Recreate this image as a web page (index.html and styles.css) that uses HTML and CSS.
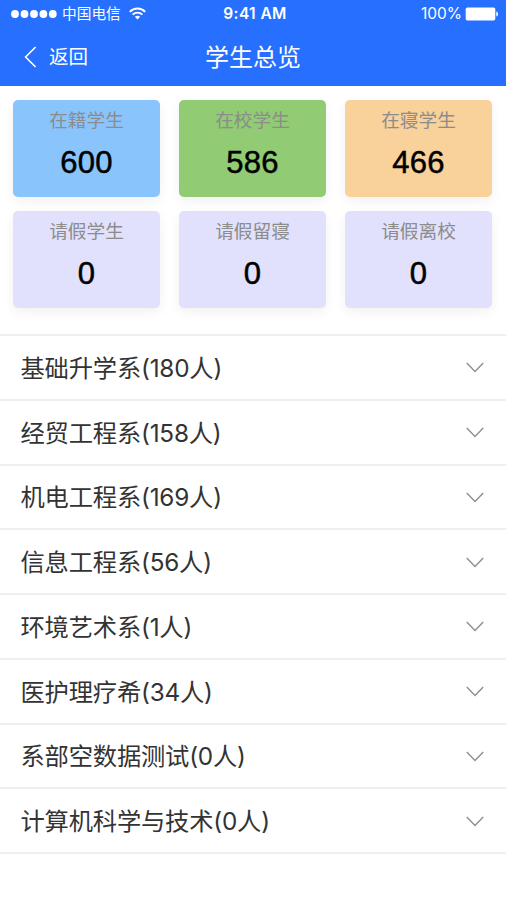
FILE: index.html
```html
<!DOCTYPE html>
<html lang="zh-CN">
<head>
  <meta charset="UTF-8">
  <meta name="viewport" content="width=device-width, initial-scale=1.0">
  <title>学生总览</title>
  <link rel="stylesheet" href="styles.css">
</head>
<body>
  <div class="page">
    <header class="header">
      <div class="status-bar">
        <div class="status-left">
          <svg class="signal" width="46" height="8" viewBox="0 0 46 8" fill="#fff">
            <circle cx="4" cy="4" r="3.9"/>
            <circle cx="13.5" cy="4" r="3.9"/>
            <circle cx="23" cy="4" r="3.9"/>
            <circle cx="32.4" cy="4" r="3.9"/>
            <circle cx="41.8" cy="4" r="3.9"/>
          </svg>
          <span class="carrier">中国电信</span>
          <svg class="wifi" width="17" height="13" viewBox="0 0 17 13" fill="none" stroke="#fff" stroke-width="1.9">
            <path d="M0.8 4.8C5 0.3 12 0.3 16.2 4.8"/>
            <path d="M3.6 7.6C6.3 4.9 10.7 4.9 13.4 7.6"/>
            <path d="M8.5 12.4L5.9 9.8C7.3 8.4 9.7 8.4 11.1 9.8Z" fill="#fff" stroke="none"/>
          </svg>
        </div>
        <div class="time">9:41 AM</div>
        <div class="status-right">
          <span class="percent">100%</span>
          <svg class="battery" width="34" height="14" viewBox="0 0 34 14" fill="#fff">
            <rect x="0.7" y="0.6" width="29.6" height="12.8" rx="1.6"/>
            <path d="M31.3 4.4C33.6 5 33.6 9 31.3 9.6Z"/>
          </svg>
        </div>
      </div>
      <div class="nav-bar">
        <a class="back">
          <svg width="13" height="22" viewBox="0 0 13 22" fill="none" stroke="#fff" stroke-width="1.6">
            <path d="M11.6 1L1.6 11L11.6 21"/>
          </svg>
          <span>返回</span>
        </a>
        <h1 class="title">学生总览</h1>
      </div>
    </header>

    <section class="stats">
      <div class="card blue"><div class="label">在籍学生</div><div class="num">600</div></div>
      <div class="card green"><div class="label">在校学生</div><div class="num">586</div></div>
      <div class="card orange"><div class="label">在寝学生</div><div class="num">466</div></div>
      <div class="card"><div class="label">请假学生</div><div class="num">0</div></div>
      <div class="card"><div class="label">请假留寝</div><div class="num">0</div></div>
      <div class="card"><div class="label">请假离校</div><div class="num">0</div></div>
    </section>

    <ul class="list">
      <li><span>基础升学系(180人)</span><svg class="arrow" viewBox="0 0 18 11"><path d="M0.8 1L9 9.4L17.2 1"/></svg></li>
      <li><span>经贸工程系(158人)</span><svg class="arrow" viewBox="0 0 18 11"><path d="M0.8 1L9 9.4L17.2 1"/></svg></li>
      <li><span>机电工程系(169人)</span><svg class="arrow" viewBox="0 0 18 11"><path d="M0.8 1L9 9.4L17.2 1"/></svg></li>
      <li><span>信息工程系(56人)</span><svg class="arrow" viewBox="0 0 18 11"><path d="M0.8 1L9 9.4L17.2 1"/></svg></li>
      <li><span>环境艺术系(1人)</span><svg class="arrow" viewBox="0 0 18 11"><path d="M0.8 1L9 9.4L17.2 1"/></svg></li>
      <li><span>医护理疗希(34人)</span><svg class="arrow" viewBox="0 0 18 11"><path d="M0.8 1L9 9.4L17.2 1"/></svg></li>
      <li><span>系部空数据测试(0人)</span><svg class="arrow" viewBox="0 0 18 11"><path d="M0.8 1L9 9.4L17.2 1"/></svg></li>
      <li><span>计算机科学与技术(0人)</span><svg class="arrow" viewBox="0 0 18 11"><path d="M0.8 1L9 9.4L17.2 1"/></svg></li>
    </ul>
  </div>
</body>
</html>
```
FILE: styles.css
```css
* {
  box-sizing: border-box;
}
body {
  margin: 0;
  background-color: #fff;
  color: #333;
  font-family: Inter, "Noto Sans CJK SC", sans-serif;
}
.page {
  width: 506px;
  height: 900px;
  overflow: hidden;
}
.header {
  height: 86px;
  background-color: #266fff;
  color: #fff;
}
.status-bar {
  display: grid;
  grid-template-columns: 1fr auto 1fr;
  align-items: center;
  height: 27px;
  padding: 0 7px 0 11px;
}
.status-left,
.status-right {
  display: flex;
  align-items: center;
}
.status-right {
  justify-content: flex-end;
}
.carrier {
  margin: 0 8px 0 5px;
  padding-top: 1px;
  font-size: 14.7px;
  line-height: 20px;
}
.time {
  font-size: 15.5px;
  font-weight: 600;
  letter-spacing: 0.4px;
  line-height: 19px;
}
.percent {
  margin-right: 3px;
  font-size: 15.5px;
  line-height: 19px;
}
.nav-bar {
  display: grid;
  grid-template-columns: 1fr auto 1fr;
  align-items: center;
  height: 59px;
  padding-left: 24px;
}
.back {
  display: flex;
  align-items: center;
  gap: 12px;
  font-size: 19.5px;
  line-height: 28px;
}
.title {
  margin: 0;
  padding: 2px 24px 0 0;
  font-size: 24px;
  font-weight: 400;
  line-height: 36px;
}
.stats {
  display: grid;
  grid-template-columns: repeat(3, 1fr);
  gap: 13.5px 19px;
  height: 248px;
  padding: 14px 14px 0 13px;
  align-content: start;
}
.card {
  height: 97px;
  padding-top: 7px;
  border-radius: 5px;
  background-color: #e1e1fd;
  box-shadow: 0 4px 12px rgba(0, 0, 0, 0.06);
  text-align: center;
}
.blue {
  background-color: #8ac4fd;
}
.green {
  background-color: #91cb74;
}
.orange {
  background-color: #f9d19a;
}
.label {
  color: #8c8c8c;
  font-size: 18.7px;
  line-height: 28px;
}
.num {
  margin-top: 8px;
  color: #000;
  font-family: "Liberation Sans", Arial, sans-serif;
  font-size: 31px;
  letter-spacing: 0.3px;
  line-height: 40px;
  -webkit-text-stroke: 0.5px #000;
}
.list {
  margin: 0;
  padding: 0;
  list-style: none;
  border-top: 2px solid #efefef;
}
.list li {
  display: flex;
  align-items: center;
  justify-content: space-between;
  height: 64.75px;
  padding: 1px 22px 0 20.5px;
  border-bottom: 2px solid #efefef;
  font-size: 24.3px;
  letter-spacing: -0.2px;
  line-height: 36px;
}
.arrow {
  width: 18px;
  height: 11px;
  fill: none;
  stroke: #8e8e8e;
  stroke-width: 1.4;
}
```
